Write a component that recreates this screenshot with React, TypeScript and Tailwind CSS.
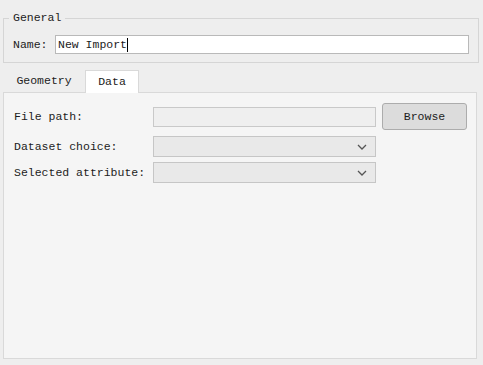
import React from 'react';

const font = 'font-["Liberation_Mono","DejaVu_Sans_Mono",monospace]';

function Chevron() {
  return (
    <svg width="10" height="6" viewBox="0 0 10 6" className="text-[#555]">
      <path d="M1 1 L5 5 L9 1" fill="none" stroke="currentColor" strokeWidth="1.3" />
    </svg>
  );
}

function Combo() {
  return (
    <div className="w-[223px] h-[21px] bg-[#e9e9e9] border border-[#c6c6c6] flex items-center justify-end pr-[8px]">
      <Chevron />
    </div>
  );
}

export default function App() {
  return (
    <div
      className={`w-[483px] h-[365px] bg-[#eeeeee] text-[#1c1c1c] text-[11.5px] leading-[14px] pl-[3px] pt-[11px] ${font}`}
    >
      {/* General group */}
      <fieldset className="w-[476px] border border-[#d5d5d5] pt-[10px] pb-[8px] pl-[9px]">
        <legend className="-ml-[4px] px-[4px] leading-[14px]">General</legend>
        <div className="flex items-center">
          <span className="w-[42px]">Name:</span>
          <div className="w-[414px] h-[19px] bg-white border border-[#b9b9b9] flex items-center pl-[2px]">
            <span>New Import</span>
            <span className="w-px h-[14px] bg-black" />
          </div>
        </div>
      </fieldset>

      {/* Tabs */}
      <div className="mt-[7px] w-[474px]">
        <div className="flex h-[22px] items-end">
          <div className="w-[82px] h-[22px] flex items-center justify-center">Geometry</div>
          <div className="w-[54px] h-[23px] -mb-px bg-white border border-b-0 border-[#d9d9d9] flex items-center justify-center relative z-10">
            Data
          </div>
        </div>
        <div className="h-[267px] bg-[#f5f5f5] border border-[#d9d9d9] pt-[10px] pl-[10px] flex flex-col gap-[6px]">
          <div className="flex items-center h-[27px]">
            <span className="w-[139px]">File path:</span>
            <div className="w-[223px] h-[20px] bg-[#efefef] border border-[#c9c9c9]" />
            <button className="ml-[6px] w-[85px] h-[27px] bg-[#dcdcdc] border border-[#acacac] rounded-[3px]">
              Browse
            </button>
          </div>
          <div className="flex items-center">
            <span className="w-[139px]">Dataset choice:</span>
            <Combo />
          </div>
          <div className="flex items-center -mt-px">
            <span className="w-[139px]">Selected attribute:</span>
            <Combo />
          </div>
        </div>
      </div>
    </div>
  );
}
